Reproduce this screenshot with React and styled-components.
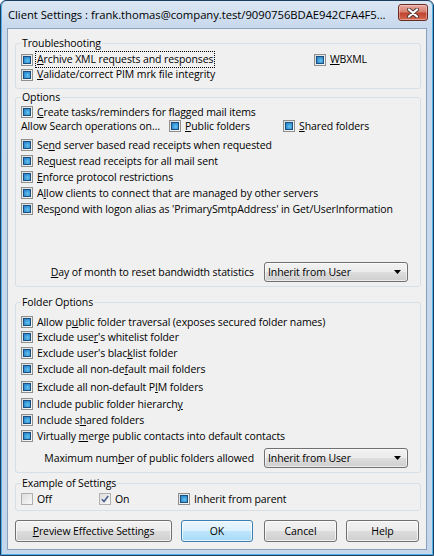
import React from "react";
import styled, { createGlobalStyle } from "styled-components";

const GlobalStyle = createGlobalStyle`
  html, body { margin: 0; padding: 0; background: #ffffff; }
  body { font-family: "Open Sans", "Noto Sans", sans-serif; color: #000; }
  u { text-decoration-thickness: 1px; text-underline-offset: 1px; }
`;

const Window = styled.div`
  width: 434px;
  height: 556px;
  box-sizing: border-box;
  border: 1px solid #1f3d5e;
  border-radius: 6px 6px 0 0;
  box-shadow: inset 1px 0 0 #4fb1ea, inset -1px 0 0 #4fb1ea, inset 0 -1px 0 #4fb1ea;
  background: linear-gradient(#dbe6f3, #c8d9ed 26px, #c3d6eb);
  padding: 0 6px 5px 6px;
  display: flex;
  flex-direction: column;
`;

const TitleBar = styled.div`
  height: 27px;
  display: flex;
  align-items: center;
  justify-content: space-between;
  padding-left: 1px;
`;

const Title = styled.div`
  font-size: 11.3px;
  letter-spacing: -0.05px;
  white-space: nowrap;
`;

const CloseButton = styled.div`
  align-self: flex-start;
  margin-top: 3px;
  margin-right: -1px;
  width: 30px;
  height: 17px;
  box-sizing: border-box;
  border: 1px solid #6b2a22;
  border-radius: 3px;
  background: linear-gradient(#e7a99f, #d7806f 45%, #c1432f 55%, #d36a52);
  box-shadow: inset 0 0 0 1px rgba(255, 255, 255, 0.35);
  display: flex;
  align-items: center;
  justify-content: center;
`;

const Client = styled.div`
  flex: 1;
  border: 1px solid #8ba0bb;
  background: #f0f0f0;
  padding: 7px 5px 0 7px;
  display: flex;
  flex-direction: column;
  font-size: 10.5px;
  letter-spacing: -0.1px;
`;

const Group = styled.fieldset`
  margin: ${p => p.$mt || 0}px 0 0 0;
  padding: ${p => p.$pt || 0}px 6px ${p => p.$pb || 4}px 5px;
  border: 1px solid #d5dfe5;
  border-radius: 3px;
  min-width: 0;
`;

const Legend = styled.legend`
  padding: 0 1px;
  line-height: 14px;
`;

const Row = styled.div`
  display: flex;
  align-items: center;
  height: ${p => p.$h || 14}px;
  margin-top: ${p => p.$mt || 0}px;
`;

const Cell = styled.div`
  flex: none;
  width: ${p => p.$w}px;
  display: flex;
  align-items: center;
`;

const CheckLabel = styled.label`
  display: flex;
  align-items: center;
  gap: 4px;
  white-space: nowrap;
`;

const Box = styled.span`
  flex: none;
  width: 12px;
  height: 12px;
  box-sizing: border-box;
  border: 1px solid ${p => (p.$dim ? "#b0b0b0" : "#8e8f8f")};
  background: linear-gradient(135deg, #dcdcdc, #fafafa);
  padding: 1px;
  display: flex;
`;

const Mixed = styled.span`
  flex: 1;
  border: 1px solid #1c4f7e;
  background: radial-gradient(circle at 60% 60%, #63c4ee, #2c8ad0 75%);
`;

const LabelText = styled.span`
  display: inline-block;
  line-height: 13px;
  outline: ${p => (p.$focused ? "1px dotted #000" : "none")};
  outline-offset: 1px;
`;

const Plain = styled.span`
  white-space: nowrap;
`;

const FieldRow = styled.div`
  display: flex;
  align-items: center;
  justify-content: flex-end;
  gap: 10px;
  height: 20px;
  margin-top: ${p => p.$mt || 0}px;
  margin-right: 6px;
  white-space: nowrap;
`;

const Select = styled.div`
  width: 144px;
  height: 20px;
  box-sizing: border-box;
  border: 1px solid #707070;
  border-radius: 3px;
  background: linear-gradient(#f2f2f2, #ebebeb 50%, #dddddd 50%, #cfcfcf);
  box-shadow: inset 0 0 0 1px rgba(255, 255, 255, 0.6);
  display: flex;
  align-items: center;
  justify-content: space-between;
  padding: 0 6px 0 3px;
`;

const Buttons = styled.div`
  display: flex;
  margin-top: 9px;
`;

const Button = styled.div`
  width: ${p => p.$w}px;
  margin-left: ${p => p.$ml || 0}px;
  height: 22px;
  box-sizing: border-box;
  border: 1px solid ${p => (p.$default ? "#3c7fb1" : "#707070")};
  border-radius: 3px;
  background: ${p =>
    p.$default
      ? "linear-gradient(#eaf6fd, #d9f0fc 50%, #bee6fd 50%, #a7d9f5)"
      : "linear-gradient(#f2f2f2, #ebebeb 50%, #dddddd 50%, #cfcfcf)"};
  box-shadow: inset 0 0 0 1px rgba(255, 255, 255, 0.7);
  display: flex;
  align-items: center;
  justify-content: center;
  white-space: nowrap;
`;

function Check({ state = "mixed", dim, focused, children }) {
  return (
    <CheckLabel>
      <Box $dim={dim}>
        {state === "mixed" && <Mixed />}
        {state === "on" && (
          <svg width="8" height="8" viewBox="0 0 8 8">
            <path d="M0.8 4.2 L3 6.6 L7.2 1" fill="none" stroke="#4a5e8e" strokeWidth="1.6" />
          </svg>
        )}
      </Box>
      <LabelText $focused={focused}>{children}</LabelText>
    </CheckLabel>
  );
}

const optionRows = [
  { mt: 5, label: <>Se<u>n</u>d server based read receipts when requested</> },
  { mt: 2, label: <>Re<u>q</u>uest read receipts for all mail sent</> },
  { mt: 2, label: <><u>E</u>nforce protocol restrictions</> },
  { mt: 2, label: <>A<u>l</u>low clients to connect that are managed by other servers</> },
  { mt: 2, label: <>Res<u>p</u>ond with logon alias as 'PrimarySmtpAddress' in Get/UserInformation</> },
];

const folderRows = [
  { mt: 6, label: <>Allow p<u>u</u>blic folder traversal (exposes secured folder names)</> },
  { mt: 1, label: <>Exclude use<u>r</u>'s whitelist folder</> },
  { mt: 2, label: <>Exclude user's blac<u>k</u>list folder</> },
  { mt: 2, label: <>Exclude all non-de<u>f</u>ault mail folders</> },
  { mt: 4, label: <>Exclude all non-default P<u>I</u>M folders</> },
  { mt: 3, label: <>Include public folder hierarch<u>y</u></> },
  { mt: 2, label: <>Include s<u>h</u>ared folders</> },
  { mt: 2, label: <>Virtually <u>m</u>erge public contacts into default contacts</> },
];

function Dropdown({ value }) {
  return (
    <Select>
      <span>{value}</span>
      <svg width="7" height="4" viewBox="0 0 7 4">
        <polygon points="0,0 7,0 3.5,4" fill="#000" />
      </svg>
    </Select>
  );
}

export default function App() {
  return (
    <>
      <GlobalStyle />
      <Window>
        <TitleBar>
          <Title>Client Settings :  frank.thomas@company.test/9090756BDAE942CFA4F5...</Title>
          <CloseButton>
            <svg width="12" height="10" viewBox="0 0 12 10">
              <path d="M2 1.5 L10 8.5 M10 1.5 L2 8.5" stroke="#4a3a38" strokeWidth="4" strokeLinecap="round" />
              <path d="M2 1.5 L10 8.5 M10 1.5 L2 8.5" stroke="#ffffff" strokeWidth="2.2" strokeLinecap="round" />
            </svg>
          </CloseButton>
        </TitleBar>

        <Client>
          <Group $pt={2} $pb={6}>
            <Legend>Troubleshooting</Legend>
            <Row $h={15}>
              <Cell $w={293}>
                <Check focused><u>A</u>rchive XML requests and responses</Check>
              </Cell>
              <Check><u>W</u>BXML</Check>
            </Row>
            <Row $h={15}>
              <Check><u>V</u>alidate/correct PIM mrk file integrity</Check>
            </Row>
          </Group>

          <Group $mt={1} $pb={4}>
            <Legend>Options</Legend>
            <Row $mt={1}>
              <Check><u>C</u>reate tasks/reminders for flagged mail items</Check>
            </Row>
            <Row>
              <Cell $w={148}>
                <Plain>Allow Search operations on…</Plain>
              </Cell>
              <Cell $w={114}>
                <Check><u>P</u>ublic folders</Check>
              </Cell>
              <Check><u>S</u>hared folders</Check>
            </Row>
            {optionRows.map((r, i) => (
              <Row key={i} $mt={r.mt}>
                <Check>{r.label}</Check>
              </Row>
            ))}
            <FieldRow $mt={46}>
              <Plain><u>D</u>ay of month to reset bandwidth statistics</Plain>
              <Dropdown value="Inherit from User" />
            </FieldRow>
          </Group>

          <Group $mt={8} $pb={4}>
            <Legend>Folder Options</Legend>
            {folderRows.map((r, i) => (
              <Row key={i} $mt={r.mt}>
                <Check>{r.label}</Check>
              </Row>
            ))}
            <FieldRow $mt={5}>
              <Plain>Maximum num<u>b</u>er of public folders allowed</Plain>
              <Dropdown value="Inherit from User" />
            </FieldRow>
          </Group>

          <Group $mt={3} $pb={4}>
            <Legend>Example of Settings</Legend>
            <Row $mt={2}>
              <Cell $w={78}>
                <Check state="off" dim>Off</Check>
              </Cell>
              <Cell $w={79}>
                <Check state="on" dim>On</Check>
              </Cell>
              <Check>Inherit from parent</Check>
            </Row>
          </Group>

          <Buttons>
            <Button $w={157}><u>P</u>review Effective Settings</Button>
            <Button $w={72} $ml={9} $default>OK</Button>
            <Button $w={73} $ml={11}>Cancel</Button>
            <Button $w={73} $ml={9}>Help</Button>
          </Buttons>
        </Client>
      </Window>
    </>
  );
}
